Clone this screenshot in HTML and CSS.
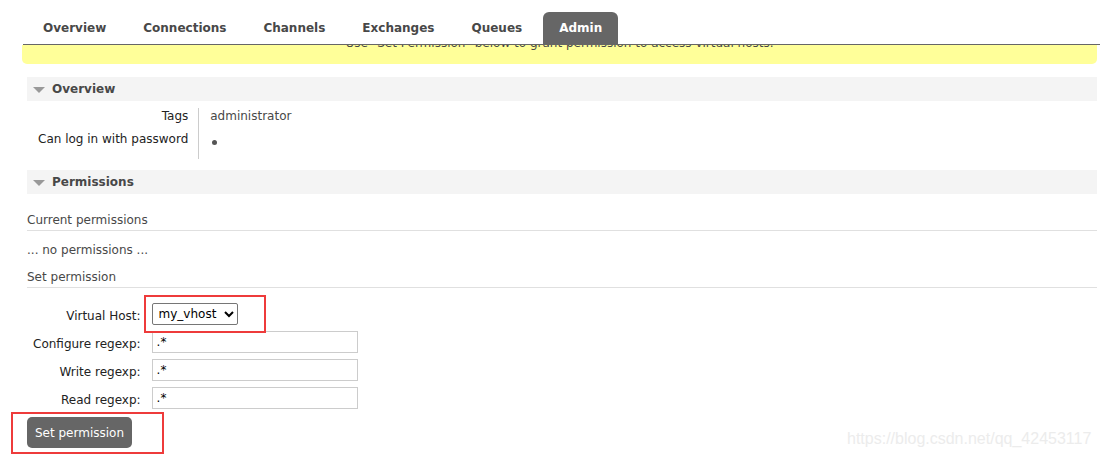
FILE: index.html
```html
<!DOCTYPE html>
<html>
<head>
<meta charset="utf-8">
<link rel="stylesheet" href="styles.css">
</head>
<body>
<div class="page">
  <nav class="tabs">
    <a class="tab">Overview</a>
    <a class="tab">Connections</a>
    <a class="tab">Channels</a>
    <a class="tab">Exchanges</a>
    <a class="tab">Queues</a>
    <a class="tab active">Admin</a>
  </nav>
  <div class="banner"><p class="banner-text">Use "Set Permission" below to grant permission to access virtual hosts.</p></div>

  <div class="content">
    <h2 class="section-head"><span class="tri"></span>Overview</h2>
    <table class="facts">
      <tr><th>Tags</th><td>administrator</td></tr>
      <tr class="last"><th>Can log in with password</th><td><span class="dot"></span></td></tr>
    </table>

    <h2 class="section-head"><span class="tri"></span>Permissions</h2>
    <h3 class="sub">Current permissions</h3>
    <p class="none">... no permissions ...</p>
    <h3 class="sub">Set permission</h3>

    <div class="form-wrap">
      <table class="form">
        <tr><th>Virtual Host:</th><td><select class="vhost"><option>my_vhost</option></select></td></tr>
        <tr><th>Configure regexp:</th><td><input class="rx" type="text" value=".*"></td></tr>
        <tr><th>Write regexp:</th><td><input class="rx" type="text" value=".*"></td></tr>
        <tr><th>Read regexp:</th><td><input class="rx" type="text" value=".*"></td></tr>
      </table>
      <button class="btn">Set permission</button>
      <div class="mark mark-select"></div>
      <div class="mark mark-button"></div>
    </div>
  </div>
  <div class="watermark">https://blog.csdn.net/qq_42453117</div>
</div>
</body>
</html>
```

FILE: styles.css
```css
html, body {
  margin: 0;
  padding: 0;
  background: #fff;
}
body {
  font-family: "DejaVu Sans", Verdana, sans-serif;
  font-size: 12px;
  color: #484848;
}
.page {
  position: relative;
  width: 1100px;
  height: 458px;
  overflow: hidden;
}
.tabs {
  display: flex;
  gap: 5px;
  margin: 12px 0 0 23px;
  padding-left: 4px;
  border-bottom: 1px solid #666;
  position: relative;
  z-index: 1;
  background: #fff;
}
.tab {
  display: block;
  height: 32px;
  line-height: 32px;
  padding: 0 16px;
  font-weight: bold;
  font-size: 12px;
  color: #484848;
  border-radius: 6px 6px 0 0;
}
.tab.active {
  background: #666;
  color: #fff;
}
.banner {
  margin: 0 3px 0 22px;
  height: 19px;
  background: #ffff99;
  border-radius: 0 0 5px 5px;
  overflow: hidden;
}
.banner-text {
  margin: -9px 0 0;
  line-height: 14px;
  text-align: center;
  color: #484848;
}
.content {
  padding: 0 3px 0 27px;
}
.section-head {
  display: flex;
  align-items: center;
  margin: 13px 0 0;
  height: 24px;
  background: #f4f4f4;
  font-size: 12px;
  font-weight: bold;
  color: #484848;
}
.facts + .section-head {
  margin-top: 11px;
}
.tri {
  width: 0;
  height: 0;
  margin: 1px 7px 0 6px;
  border-left: 6px solid transparent;
  border-right: 6px solid transparent;
  border-top: 6px solid #999;
}
.facts {
  border-collapse: collapse;
  margin-top: 7px;
}
.facts th {
  font-weight: normal;
  text-align: right;
  color: #222;
  padding: 1px 10px 8px 11px;
  line-height: 14px;
  vertical-align: top;
}
.facts td {
  border-left: 1px solid #ccc;
  padding: 1px 10px 8px 11px;
  line-height: 14px;
  vertical-align: top;
  color: #484848;
}
.facts tr.last th, .facts tr.last td {
  padding-bottom: 11px;
}
.dot {
  display: inline-block;
  width: 5px;
  height: 5px;
  border-radius: 50%;
  background: #555;
  margin: 8px 0 0 2px;
}
.sub {
  margin: 19px 0 0;
  font-size: 12px;
  font-weight: normal;
  line-height: 14px;
  padding-bottom: 3px;
  border-bottom: 1px solid #e0e0e0;
  color: #484848;
}
.none {
  margin: 12px 0 0;
  line-height: 14px;
}
.none + .sub {
  margin-top: 13px;
}
.form-wrap {
  position: relative;
  margin-top: 12px;
}
.form {
  border-collapse: collapse;
}
.form th {
  font-weight: normal;
  text-align: right;
  color: #222;
  padding: 5px 11px 1px 6px;
  line-height: 22px;
}
.form td {
  padding: 3px 0;
}
.vhost {
  display: block;
  width: 86px;
  height: 22px;
  font-family: "DejaVu Sans", Verdana, sans-serif;
  font-size: 12px;
  color: #000;
  border: 1px solid #767676;
  border-radius: 2px;
  background: #fff;
  padding: 0 2px;
}
.rx {
  display: block;
  box-sizing: border-box;
  width: 206px;
  height: 22px;
  border: 1px solid #ccc;
  padding: 0 4px;
  font-family: "DejaVu Sans", Verdana, sans-serif;
  font-size: 12px;
  color: #000;
}
.btn {
  display: block;
  margin-top: 5px;
  width: 105px;
  height: 31px;
  border: 0;
  border-radius: 5px;
  background: #666;
  color: #fff;
  font-family: "DejaVu Sans", Verdana, sans-serif;
  font-size: 12px;
  padding: 0;
}
.mark {
  position: absolute;
  border: 2px solid #ee3b3b;
  box-sizing: border-box;
}
.mark-select {
  left: 117px;
  top: -5px;
  width: 122px;
  height: 38px;
}
.mark-button {
  left: -16px;
  top: 112px;
  width: 153px;
  height: 42px;
}
.watermark {
  position: absolute;
  left: 847px;
  top: 430px;
  font-family: "Liberation Sans", Arial, sans-serif;
  font-size: 16px;
  color: #ececec;
  white-space: nowrap;
}
```
